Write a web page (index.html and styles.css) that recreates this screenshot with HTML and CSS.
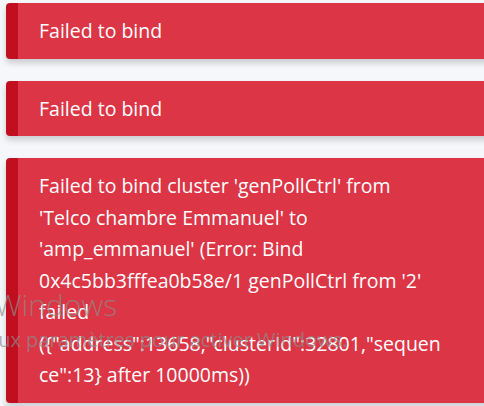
FILE: index.html
```html
<!DOCTYPE html>
<html lang="fr">
<head>
    <meta charset="UTF-8">
    <meta name="viewport" content="width=device-width, initial-scale=1.0">
    <title>Notifications</title>
    <link rel="stylesheet" href="styles.css">
</head>
<body>
<main class="toast-list">
    <div class="toast">Failed to bind</div>
    <div class="toast">Failed to bind</div>
    <div class="toast">Failed to bind cluster 'genPollCtrl' from 'Telco chambre Emmanuel' to 'amp_emmanuel' (Error: Bind 0x4c5bb3fffea0b58e/1 genPollCtrl from '2' failed ({"address":13658,"clusterId":32801,"sequence":13} after 10000ms))</div>
</main>

<!-- Windows activation watermark -->
<div class="watermark">
    <p class="watermark-title">Activer Windows</p>
    <p class="watermark-text">Accédez aux paramètres pour activer Windows.</p>
</div>
</body>
</html>
```

FILE: styles.css
```css
* {
    margin: 0;
    padding: 0;
    box-sizing: border-box;
}

html, body {
    height: 100%;
    overflow: hidden;
}

body {
    background-color: #f6f7fb;
    font-family: "Open Sans", "Noto Sans", sans-serif;
}

.toast-list {
    display: flex;
    flex-direction: column;
    gap: 22px;
    padding: 3px 0 0 6px;
    width: 520px;
}

.toast {
    background-color: #dc3545;
    color: #fff;
    border-left: 12px solid #c10f20;
    border-radius: 4px;
    padding: 12px 76px 12px 21px;
    font-size: 19.5px;
    line-height: 31.5px;
    overflow-wrap: anywhere;
    box-shadow: 0 4px 6px rgba(0, 0, 0, 0.18);
}

/* Watermark over the page */
.watermark {
    position: absolute;
    left: -104px;
    top: 285px;
    color: rgba(140, 140, 140, 0.7);
    white-space: nowrap;
    pointer-events: none;
}

.watermark-title {
    font-size: 30px;
    font-weight: 300;
    line-height: 40px;
}

.watermark-text {
    font-size: 20px;
    line-height: 30px;
    margin-left: 10px;
}
```
